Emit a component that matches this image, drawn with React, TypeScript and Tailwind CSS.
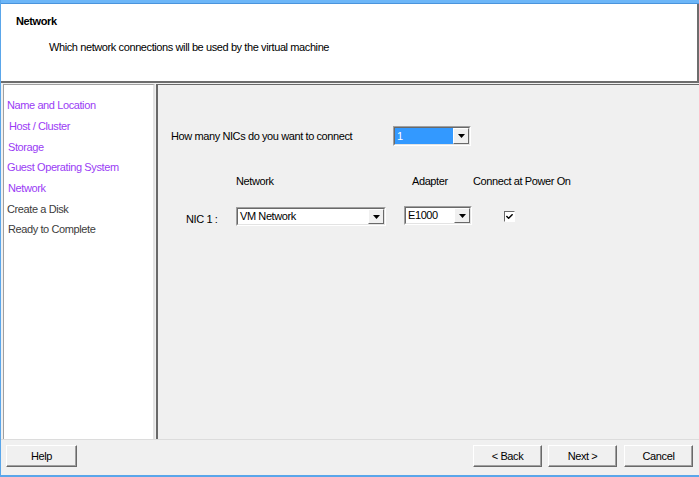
import { FaCheck } from "react-icons/fa";

const steps = [
  { label: "Name and Location", cls: "h-[21px] pl-[3px] text-[#9a3cf5]" },
  { label: "Host / Cluster", cls: "h-[21px] pl-[5px] text-[#9a3cf5]" },
  { label: "Storage", cls: "h-[20px] pl-[4px] text-[#9a3cf5]" },
  { label: "Guest Operating System", cls: "h-[21px] pl-[3px] text-[#9a3cf5]" },
  { label: "Network", cls: "h-[21px] pl-[4px] text-[#9a3cf5]" },
  { label: "Create a Disk", cls: "h-[20px] pl-[3px] text-[#3c3c3c]" },
  { label: "Ready to Complete", cls: "h-[21px] pl-[4px] text-[#3c3c3c]" },
];

function Arrow() {
  return (
    <div className="flex h-full w-[16px] items-center justify-center border border-t-white border-l-white border-r-[#696969] border-b-[#696969] bg-[#f0f0f0]">
      <svg width="7" height="4" viewBox="0 0 7 4">
        <path d="M0 0h7L3.5 4z" fill="#000" />
      </svg>
    </div>
  );
}

function Combo({
  value,
  selected,
  className,
}: {
  value: string;
  selected?: boolean;
  className: string;
}) {
  return (
    <div
      className={`flex border border-t-[#a0a0a0] border-l-[#a0a0a0] border-r-white border-b-white ${className}`}
    >
      <div className="flex flex-1 border border-t-[#696969] border-l-[#696969] border-r-[#e3e3e3] border-b-[#e3e3e3] bg-white">
        <div
          className={`flex flex-1 items-center pl-[2px] ${
            selected ? "bg-[#3399ff] text-white" : "text-black"
          }`}
        >
          {value}
        </div>
        <Arrow />
      </div>
    </div>
  );
}

function Button({ children, className }: { children: string; className: string }) {
  return (
    <button
      className={`flex h-[22px] items-center justify-center border border-t-white border-l-white border-r-[#696969] border-b-[#696969] bg-[#f0f0f0] text-black shadow-[inset_-1px_-1px_#a0a0a0] ${className}`}
    >
      {children}
    </button>
  );
}

export default function App() {
  return (
    <div className="flex h-[477px] w-[699px] flex-col overflow-hidden border-l border-b-2 border-[#5aa6ea] bg-[#f0f0f0] font-['Liberation_Sans',Arial,sans-serif] text-[11px] leading-[13px] tracking-[-0.4px] text-black">
      <div className="h-[4px] shrink-0 border-b border-[#4a94dc] bg-[#6cb6f8]" />

      <div className="h-[79px] shrink-0 border-r-2 border-b-2 border-[#6d6d6d] bg-white">
        <div className="pl-[15px] pt-[11px] font-bold">Network</div>
        <div className="pl-[48px] pt-[13px]">
          Which network connections will be used by the virtual machine
        </div>
      </div>

      <div className="flex h-[356px] shrink-0 pl-[2px] pt-[1px]">
        <div className="w-[152px] border-t border-l border-r-2 border-t-[#a0a0a0] border-l-[#a0a0a0] border-r-[#e3e3e3] bg-white pt-[14px]">
          {steps.map((s) => (
            <div key={s.label} className={s.cls}>
              {s.label}
            </div>
          ))}
        </div>
        <div className="ml-[1px] flex-1 border-t border-l-2 border-[#696969] bg-[#f0f0f0]">
          <div className="mt-[41px] flex items-center">
            <div className="w-[235px] pl-[13px] pt-[1px]">How many NICs do you want to connect</div>
            <Combo value="1" selected className="h-[20px] w-[78px]" />
          </div>

          <div className="mt-[29px] flex">
            <div className="w-[78px]" />
            <div className="w-[176px]">Network</div>
            <div className="w-[61px]">Adapter</div>
            <div>Connect at Power On</div>
          </div>

          <div className="mt-[18px] flex items-start">
            <div className="w-[78px] pl-[28px] pt-[7px]">NIC 1 :</div>
            <Combo value="VM Network" className="mt-[1px] h-[19px] w-[150px]" />
            <Combo value="E1000" className="ml-[18px] h-[19px] w-[68px]" />
            <div className="ml-[32px] mt-[5px] flex h-[11px] w-[11px] items-center justify-center border border-t-[#696969] border-l-[#696969] border-r-white border-b-white bg-white">
              <FaCheck className="h-[7px] w-[7px]" />
            </div>
          </div>
        </div>
      </div>

      <div className="flex flex-1 items-start border-t border-[#dcdcdc] pt-[5px]">
        <Button className="ml-[5px] w-[71px]">Help</Button>
        <div className="flex-1" />
        <Button className="w-[69px]">&lt; Back</Button>
        <Button className="ml-[6px] w-[69px]">Next &gt;</Button>
        <Button className="ml-[7px] mr-[6px] w-[69px]">Cancel</Button>
      </div>
    </div>
  );
}
